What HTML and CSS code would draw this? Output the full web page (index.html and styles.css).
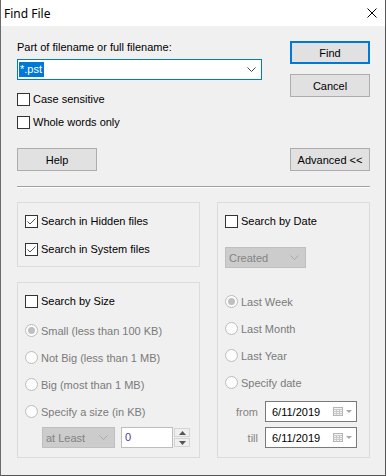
FILE: index.html
```html
<!DOCTYPE html>
<html lang="en">

<head>
  <meta charset="UTF-8" />
  <title>Find File</title>
  <link rel="stylesheet" href="styles.css">
</head>

<body>
  <div class="window">
    <div class="titlebar">
      <span class="title">Find File</span>
      <svg class="close" width="10" height="10" viewBox="0 0 10 10">
        <path d="M0.5 0.5 L9.5 9.5 M9.5 0.5 L0.5 9.5" stroke="#000" stroke-width="1" fill="none" />
      </svg>
    </div>

    <div class="content">
      <div class="top">
        <div class="search-col">
          <label class="field-label">Part of filename or full filename:</label>
          <div class="combo combo-focus">
            <span class="selected-text">*.pst</span>
            <svg class="chevron" width="9" height="5" viewBox="0 0 9 5">
              <path d="M0.5 0.5 L4.5 4.5 L8.5 0.5" stroke="#444" stroke-width="1" fill="none" />
            </svg>
          </div>
          <label class="check case"><span class="box"></span>Case sensitive</label>
          <label class="check whole"><span class="box"></span>Whole words only</label>
        </div>

        <div class="button-col">
          <button class="btn btn-default">Find</button>
          <button class="btn btn-cancel">Cancel</button>
        </div>
      </div>

      <div class="button-row">
        <button class="btn">Help</button>
        <button class="btn">Advanced &lt;&lt;</button>
      </div>

      <div class="separator"></div>

      <div class="options">
        <div class="options-left">
          <div class="group group-attrs">
            <label class="check">
              <span class="box">
                <svg width="11" height="11" viewBox="0 0 11 11">
                  <path d="M1.5 5.5 L4 8 L9.5 2.5" stroke="#555" stroke-width="1" fill="none" />
                </svg>
              </span>Search in Hidden files
            </label>
            <label class="check check-gap">
              <span class="box">
                <svg width="11" height="11" viewBox="0 0 11 11">
                  <path d="M1.5 5.5 L4 8 L9.5 2.5" stroke="#555" stroke-width="1" fill="none" />
                </svg>
              </span>Search in System files
            </label>
          </div>

          <div class="group group-size">
            <label class="check"><span class="box"></span>Search by Size</label>
            <div class="radio first"><span class="dot checked"></span>Small (less than 100 KB)</div>
            <div class="radio"><span class="dot"></span>Not Big (less than 1 MB)</div>
            <div class="radio"><span class="dot"></span>Big (most than 1 MB)</div>
            <div class="radio"><span class="dot"></span>Specify a size (in KB)</div>
            <div class="size-row">
              <div class="combo combo-disabled size-combo">
                <span>at Least</span>
                <svg class="chevron" width="9" height="5" viewBox="0 0 9 5">
                  <path d="M0.5 0.5 L4.5 4.5 L8.5 0.5" stroke="#a8a8a8" stroke-width="1" fill="none" />
                </svg>
              </div>
              <div class="spin-edit">0</div>
              <div class="spin-buttons">
                <span class="spin-btn">
                  <svg width="7" height="4" viewBox="0 0 7 4"><path d="M3.5 0 L7 4 L0 4 Z" fill="#555" /></svg>
                </span>
                <span class="spin-btn">
                  <svg width="7" height="4" viewBox="0 0 7 4"><path d="M0 0 L7 0 L3.5 4 Z" fill="#555" /></svg>
                </span>
              </div>
            </div>
          </div>
        </div>

        <div class="group group-date">
          <label class="check"><span class="box"></span>Search by Date</label>
          <div class="combo combo-disabled date-combo">
            <span>Created</span>
            <svg class="chevron" width="9" height="5" viewBox="0 0 9 5">
              <path d="M0.5 0.5 L4.5 4.5 L8.5 0.5" stroke="#a8a8a8" stroke-width="1" fill="none" />
            </svg>
          </div>
          <div class="radio date-first"><span class="dot checked"></span>Last Week</div>
          <div class="radio"><span class="dot"></span>Last Month</div>
          <div class="radio"><span class="dot"></span>Last Year</div>
          <div class="radio"><span class="dot"></span>Specify date</div>

          <div class="date-row date-from">
            <span class="date-label">from</span>
            <div class="date-box">
              <span class="date-text">6/11/2019</span>
              <svg class="cal" width="10" height="9" viewBox="0 0 10 9">
                <rect x="0.5" y="0.5" width="9" height="8" fill="#f4f4f4" stroke="#b4b4b4" />
                <path d="M0.5 2.5 H9.5 M0.5 4.5 H9.5 M0.5 6.5 H9.5 M3.5 2.5 V8.5 M6.5 2.5 V8.5" stroke="#c8c8c8" />
              </svg>
              <svg class="drop" width="6" height="3" viewBox="0 0 6 3"><path d="M0 0 L6 0 L3 3 Z" fill="#a8a8a8" /></svg>
            </div>
          </div>
          <div class="date-row date-till">
            <span class="date-label">till</span>
            <div class="date-box">
              <span class="date-text">6/11/2019</span>
              <svg class="cal" width="10" height="9" viewBox="0 0 10 9">
                <rect x="0.5" y="0.5" width="9" height="8" fill="#f4f4f4" stroke="#b4b4b4" />
                <path d="M0.5 2.5 H9.5 M0.5 4.5 H9.5 M0.5 6.5 H9.5 M3.5 2.5 V8.5 M6.5 2.5 V8.5" stroke="#c8c8c8" />
              </svg>
              <svg class="drop" width="6" height="3" viewBox="0 0 6 3"><path d="M0 0 L6 0 L3 3 Z" fill="#a8a8a8" /></svg>
            </div>
          </div>
        </div>
      </div>
    </div>
  </div>
</body>

</html>
```

FILE: styles.css
```css
:root {
  --face: #f0f0f0;
  --accent: #0078d7;
  --btn-face: #e1e1e1;
  --btn-border: #adadad;
  --group-border: #dcdcdc;
  --disabled-text: #7a7a7a;
}

* {
  margin: 0;
  padding: 0;
  box-sizing: border-box;
}

body {
  background: #ffffff;
  font-family: "Liberation Sans", Arial, sans-serif;
  font-size: 11px;
  color: #000;
}

.window {
  width: 386px;
  height: 476px;
  background: var(--face);
  border-left: 1px solid #6a6a6a;
  border-right: 1px solid #555;
  border-bottom: 1px solid #555;
}

/* Title bar */
.titlebar {
  height: 26px;
  background: #ffffff;
  display: flex;
  align-items: center;
  justify-content: space-between;
  padding: 0 8px 0 3px;
}

.title {
  font-family: "Noto Sans", "Open Sans", sans-serif;
  font-size: 12px;
}

/* Content */
.content {
  padding: 15px 15px 0 16px;
}

.top {
  display: grid;
  grid-template-columns: 245px 80px;
  justify-content: space-between;
}

.field-label {
  display: block;
  line-height: 13px;
}

.combo {
  height: 21px;
  display: flex;
  align-items: center;
  justify-content: space-between;
  padding: 0 5px 0 3px;
}

.combo-focus {
  margin-top: 5px;
  background: #fff;
  border: 1px solid var(--accent);
  padding-left: 1px;
}

.selected-text {
  background: var(--accent);
  color: #fff;
  line-height: 15px;
  padding: 0 2px 0 1px;
}

.combo-disabled {
  background: #cccccc;
  border: 1px solid #bfbfbf;
  color: #838383;
  padding: 0 6px 0 3px;
}

.check {
  display: flex;
  align-items: center;
  height: 13px;
  line-height: 13px;
}

.check .box {
  width: 13px;
  height: 13px;
  border: 1px solid #333;
  background: #fff;
  margin-right: 3px;
  display: flex;
  align-items: center;
  justify-content: center;
  flex-shrink: 0;
}

.case {
  margin-top: 13px;
}

.whole {
  margin-top: 10px;
}

.check-gap {
  margin-top: 15px;
}

/* Buttons */
.button-col {
  display: flex;
  flex-direction: column;
}

.btn {
  width: 80px;
  height: 23px;
  background: var(--btn-face);
  border: 1px solid var(--btn-border);
  font-family: inherit;
  font-size: 11px;
  color: #000;
}

.btn-default {
  border: 2px solid var(--accent);
}

.btn-cancel {
  margin-top: 10px;
}

.button-row {
  display: flex;
  justify-content: space-between;
  margin-top: 19px;
}

.separator {
  margin-top: 15px;
  border-top: 1px solid #a0a0a0;
  border-bottom: 1px solid #fff;
}

/* Option groups */
.options {
  margin-top: 14px;
  display: grid;
  grid-template-columns: 183px 153px;
  justify-content: space-between;
}

.options-left {
  display: flex;
  flex-direction: column;
}

.group {
  border: 1px solid var(--group-border);
  padding: 12px 7px;
}

.group-attrs {
  height: 65px;
}

.group-size {
  margin-top: 15px;
  height: 176px;
}

.group-date {
  height: 256px;
}

.radio {
  display: flex;
  align-items: center;
  height: 13px;
  margin-top: 14px;
  color: var(--disabled-text);
}

.radio.first {
  margin-top: 16px;
}

.radio.date-first {
  margin-top: 27px;
}

.dot {
  width: 13px;
  height: 13px;
  border: 1px solid #bcbcbc;
  border-radius: 50%;
  background: #fcfcfc;
  margin-right: 3px;
  display: flex;
  align-items: center;
  justify-content: center;
}

.dot.checked::after {
  content: "";
  width: 7px;
  height: 7px;
  border-radius: 50%;
  background: #bfbfbf;
}

.size-row {
  display: flex;
  margin-top: 9px;
  padding-left: 17px;
}

.size-combo {
  width: 73px;
}

.spin-edit {
  width: 52px;
  height: 21px;
  margin-left: 6px;
  background: #fff;
  border: 1px solid #bdbdbd;
  color: #4a3aa0;
  line-height: 19px;
  padding-left: 3px;
}

.spin-buttons {
  display: flex;
  flex-direction: column;
  gap: 1px;
  margin-left: 1px;
  padding-top: 1px;
}

.spin-btn {
  width: 16px;
  height: 9px;
  border: 1px solid #d4d4d4;
  background: #efefef;
  display: flex;
  align-items: center;
  justify-content: center;
}

.date-combo {
  width: 81px;
  margin-top: 19px;
}

.date-row {
  display: flex;
  align-items: center;
}

.date-from {
  margin-top: 12px;
}

.date-till {
  margin-top: 5px;
}

.date-label {
  width: 33px;
  text-align: right;
  margin-right: 7px;
  color: #838383;
}

.date-box {
  width: 92px;
  height: 21px;
  background: #fff;
  border: 1px solid #7a7a7a;
  display: flex;
  align-items: center;
  padding-left: 6px;
}

.date-text {
  flex: 1;
}

.cal {
  margin-right: 3px;
}

.drop {
  margin-right: 4px;
}
```
